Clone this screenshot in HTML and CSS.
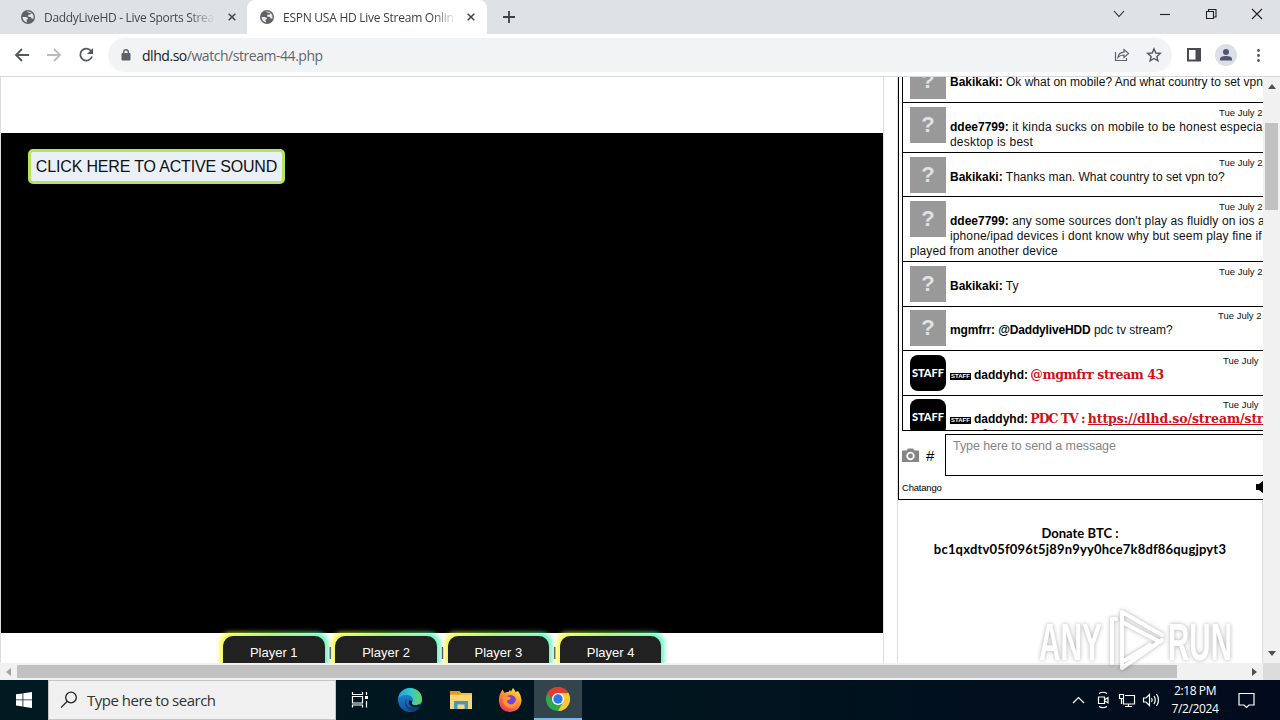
FILE: index.html
```html
<!DOCTYPE html>
<html lang="en">
<head>
    <meta charset="UTF-8">
    <meta name="viewport" content="width=device-width, initial-scale=1.0">
    <title>ESPN USA HD Live Stream Online</title>
    <link rel="stylesheet" href="styles.css">
</head>
<body>
    <svg width="0" height="0" class="defs">
        <symbol id="globe" viewBox="0 0 14 14">
            <circle cx="7" cy="7" r="7" fill="#5f6368"/>
            <path d="M1.5 7 L4.5 7 Q7 7 7 9 L5.5 9.5 L6 12.4 Q2 11.8 1.5 7Z M5.4 1.8 Q8 1 10.5 2.7 L9.5 4.5 L7.2 4.8 L7.4 6.8 L10 7 L10.6 8.6 L12.5 8.8 Q13 6 11.6 3.7" fill="#e8eaed"/>
        </symbol>
    </svg>

    <div class="tabs">
        <div class="tab">
            <svg class="favicon"><use href="#globe"/></svg>
            <span class="tab-title tab-title-first">DaddyLiveHD - Live Sports Strea</span>
            <svg class="tab-close" viewBox="0 0 8 8"><path d="M.7 .7 L7.3 7.3 M7.3 .7 L.7 7.3"/></svg>
        </div>
        <div class="tab active">
            <svg class="favicon"><use href="#globe"/></svg>
            <span class="tab-title">ESPN USA HD Live Stream Onlin</span>
            <svg class="tab-close" viewBox="0 0 8 8"><path d="M.7 .7 L7.3 7.3 M7.3 .7 L.7 7.3"/></svg>
        </div>
        <svg class="new-tab" viewBox="0 0 12 12"><path d="M6 0 V12 M0 6 H12" stroke="#3c4043" stroke-width="1.8"/></svg>
        <svg class="window-buttons" width="164" height="34" viewBox="0 0 164 34" fill="none" stroke="#222" stroke-width="1.1">
            <path d="M4 11 L9 16.5 L14 11"/>
            <path d="M50 14.5 H60"/>
            <path d="M96.5 11.5 h7 v7 h-7z M98.5 11.5 v-2 h7.5 v7.5 h-2.5"/>
            <path d="M142 9 L152 19 M152 9 L142 19"/>
        </svg>
    </div>

    <div class="toolbar">
        <svg class="nav" width="100" height="42" viewBox="0 0 100 42" fill="none" stroke="#55585c" stroke-width="1.8">
            <path d="M29 21 H16 M22 15 L16 21 L22 27"/>
            <path d="M47 21 H60 M54 15 L60 21 L54 27" stroke="#b8babd"/>
            <path d="M91.3 17.3 A6 6 0 1 0 92 22.5"/>
            <path d="M93 14 V20 H87Z" fill="#55585c" stroke="none"/>
        </svg>
        <div class="omnibox">
            <svg class="lock" width="10" height="12" viewBox="0 0 10 12"><path d="M1 4.5 H9 V11 H1Z" fill="#5f6368" stroke="#5f6368"/><path d="M2.7 4.5 V3 a2.3 2.3 0 0 1 4.6 0 V4.5" fill="none" stroke="#5f6368" stroke-width="1.4"/></svg>
            <span class="url"><b>dlhd.so</b>/watch/stream-44.php</span>
            <svg class="share" width="16" height="16" viewBox="0 0 16 16" fill="none" stroke="#5f6368" stroke-width="1.2"><path d="M1.5 5 V13.5 H12.5 V11"/><path d="M4 10.5 Q4.5 5.5 10 5.2 V2.5 L14.5 6.5 L10 10.5 V8 Q6 7.8 4 10.5Z"/></svg>
            <svg class="star" width="16" height="16" viewBox="0 0 16 16" fill="none" stroke="#55585c" stroke-width="1.4"><path d="M8 1.8 L9.8 6 L14.3 6.4 L10.9 9.4 L11.9 13.8 L8 11.5 L4.1 13.8 L5.1 9.4 L1.7 6.4 L6.2 6Z"/></svg>
        </div>
        <svg class="tools" width="96" height="42" viewBox="0 0 96 42">
            <path d="M4 15 H16 V26.5 H4Z" fill="none" stroke="#484b50" stroke-width="2"/><path d="M11.5 15 H17 V27 H11.5Z" fill="#484b50"/>
            <circle cx="42" cy="21" r="11" fill="#dcdfe8"/><circle cx="42" cy="18" r="3" fill="#505672"/><path d="M36 26.5 V25 Q36 22 42 22 Q48 22 48 25 V26.5Z" fill="#505672"/>
            <circle cx="74.5" cy="16.5" r="1.4" fill="#55585c"/><circle cx="74.5" cy="21.5" r="1.4" fill="#55585c"/><circle cx="74.5" cy="26.5" r="1.4" fill="#55585c"/>
        </svg>
    </div>

    <div class="viewport">
        <div class="page">
            <div class="main">
                <div class="player">
                    <button class="unmute">CLICK HERE TO ACTIVE SOUND</button>
                </div>
                <div class="players">
                    <button class="glow">Player 1</button><i>|</i>
                    <button class="glow">Player 2</button><i>|</i>
                    <button class="glow">Player 3</button><i>|</i>
                    <button class="glow">Player 4</button>
                </div>
            </div>

            <div class="sidebar">
                <div class="chat">
                    <div class="messages">
                        <div class="msg first">
                            <span class="avatar">?</span>
                            <div class="date">Tue July 2</div>
                            <b>Bakikaki:</b> Ok what on mobile? And what country to set vpn
                        </div>
                        <div class="msg two">
                            <span class="avatar">?</span>
                            <div class="date">Tue July 2</div>
                            <b>ddee7799:</b> it kinda sucks on mobile to be honest especia<br>desktop is best
                        </div>
                        <div class="msg">
                            <span class="avatar">?</span>
                            <div class="date">Tue July 2</div>
                            <b>Bakikaki:</b> Thanks man. What country to set vpn to?
                        </div>
                        <div class="msg three">
                            <span class="avatar">?</span>
                            <div class="date">Tue July 2</div>
                            <b>ddee7799:</b> any some sources don't play as fluidly on ios a<br>iphone/ipad devices i dont know why but seem play fine if<br>played from another device
                        </div>
                        <div class="msg tall">
                            <span class="avatar">?</span>
                            <div class="date">Tue July 2</div>
                            <b>Bakikaki:</b> Ty
                        </div>
                        <div class="msg tight">
                            <span class="avatar">?</span>
                            <div class="date early">Tue July 2</div>
                            <b class="mention">mgmfrr: @DaddyliveHDD</b> pdc tv stream?
                        </div>
                        <div class="msg tall">
                            <span class="avatar staff">STAFF</span>
                            <div class="date late">Tue July</div>
                            <span class="badge">STAFF</span><b>daddyhd:</b> <span class="red">@mgmfrr stream 43</span>
                        </div>
                        <div class="msg tight two">
                            <span class="avatar staff">STAFF</span>
                            <div class="date late">Tue July</div>
                            <span class="badge">STAFF</span><b>daddyhd:</b> <span class="red"><span class="narrow">PDC TV : </span><u>https://dlhd.so/stream/str</u><br><span class="wrapped">ph</span></span>
                        </div>
                    </div>
                    <div class="compose">
                        <svg width="17" height="14" viewBox="0 0 17 14"><path d="M0 2.5 H4.5 L6 .5 H11 L12.5 2.5 H17 V14 H0Z" fill="#858585"/><circle cx="8.5" cy="8" r="3.3" fill="none" stroke="#fff" stroke-width="1.8"/></svg>
                        <span class="hash">#</span>
                        <div class="input">Type here to send a message</div>
                    </div>
                    <div class="chat-foot">
                        <span>Chatango</span>
                        <svg width="8" height="14" viewBox="0 0 8 14"><path d="M0 4 H3 L8 0 V14 L3 10 H0Z"/></svg>
                    </div>
                </div>
                <p class="donate">Donate BTC :<br><span>bc1qxdtv05f096t5j89n9yy0hce7k8df86qugjpyt3</span></p>
            </div>
        </div>

        <div class="vscroll">
            <svg width="8" height="5" viewBox="0 0 8 5"><path d="M0 5 L4 0 L8 5Z" fill="#505050"/></svg>
            <div class="vthumb"></div>
            <svg width="8" height="5" viewBox="0 0 8 5"><path d="M0 0 L4 5 L8 0Z" fill="#505050"/></svg>
        </div>
        <div class="hscroll">
            <svg width="5" height="8" viewBox="0 0 5 8"><path d="M5 0 L0 4 L5 8Z" fill="#a3a3a3"/></svg>
            <div class="hthumb"></div>
            <svg width="5" height="8" viewBox="0 0 5 8"><path d="M0 0 L5 4 L0 8Z" fill="#505050"/></svg>
        </div>
        <div class="corner"></div>
    </div>

    <svg class="watermark" width="210" height="72" viewBox="0 0 210 72">
        <text x="7" y="54" textLength="63" lengthAdjust="spacingAndGlyphs">ANY</text>
        <text x="136" y="54" textLength="64" lengthAdjust="spacingAndGlyphs">RUN</text>
        <path d="M80 57 V13 H84 M90 56 V6 L130 29 M92 17 L128 36 M130 34 L90 62 V56 L118 39" fill="none" stroke="#fff" stroke-width="4" stroke-linejoin="round" stroke-linecap="round"/>
    </svg>

    <div class="taskbar">
        <svg class="start" width="16" height="16" viewBox="0 0 16 16" fill="#fff"><path d="M0 2.3 L6.5 1.4 V7.5 H0Z M7.3 1.3 L16 0 V7.5 H7.3Z M0 8.3 H6.5 V14.5 L0 13.6Z M7.3 8.3 H16 V16 L7.3 14.7Z"/></svg>
        <div class="search">
            <svg width="18" height="18" viewBox="0 0 18 18" fill="none" stroke="#222" stroke-width="1.3"><circle cx="11" cy="6.5" r="5.3"/><path d="M7.3 10.3 L1 16.6"/></svg>
            <span>Type here to search</span>
        </div>
        <div class="app first-app"><svg width="18" height="18" viewBox="0 0 18 18" fill="none" stroke="#fff" stroke-width="1.2"><path d="M1.5 1 V3.5 H11.5 V1 M1.5 5.5 H11.5 V12 H1.5Z M1.5 16.5 V14 H11.5 V16.5 M15.5 1 V4 M15.5 10 V16.5"/><path d="M14 5 H17 V8 H14Z" fill="#fff" stroke="none"/></svg></div>
        <div class="app wide">
            <svg width="24" height="24" viewBox="0 0 24 24">
                <defs>
                    <linearGradient id="edge-top"><stop offset="0" stop-color="#219fdc"/><stop offset=".55" stop-color="#38c8c8"/><stop offset="1" stop-color="#65d45a"/></linearGradient>
                    <linearGradient id="edge-low" x2="0" y2="1"><stop offset="0" stop-color="#1b93dc"/><stop offset="1" stop-color="#1250a0"/></linearGradient>
                </defs>
                <circle cx="12" cy="12" r="12" fill="url(#edge-low)"/>
                <path d="M0 11 C1 4 6 0 12 0 C19 0 24 5 24 11 C24 15 21 17 17.5 17 C14 17 13 15.5 14.5 13.5 C16 10 13 7 9 7 C5 7 1 8.5 0 11Z" fill="url(#edge-top)"/>
                <path d="M9 11 C6 18 12 22 22 18 C20 21 18 23 15 23.6 C7 22 5 14 9 11Z" fill="#0d4078"/>
                <path d="M14.5 13.5 C12.5 16 15 17.8 19 17 C24 16 24.5 17 22.5 18.5 C14 21.5 9 16 11.5 12Z" fill="#001821"/>
            </svg>
        </div>
        <div class="app"><svg width="22" height="18" viewBox="0 0 22 18"><path d="M0 0 H9 L11 2 H22 V18 H0Z" fill="#f5bd38"/><path d="M0 0 H9 L11 2 L9 3.5 H0Z" fill="#e49a22"/><path d="M0 4 H22 V18 H0Z" fill="#fad675"/><path d="M4 10 H18 V18 H14.5 V13.5 H7.5 V18 H4Z" fill="#4398c9"/></svg></div>
        <div class="app">
            <svg width="24" height="24" viewBox="0 0 24 24">
                <defs><linearGradient id="fox" x1=".8" x2=".2" y2="1"><stop offset="0" stop-color="#ffe748"/><stop offset=".45" stop-color="#ff9030"/><stop offset="1" stop-color="#f32868"/></linearGradient></defs>
                <path d="M3 4 L4.5 1.5 L6.5 5 Q8 3.5 10.5 4 L12 2 L13 3.5 L15 0 Q17 2 17.5 4 L20 3 Q24 8 23.5 13 Q22.5 23 12 24 Q2 23.5 1 14 Q.5 8 3 4Z" fill="url(#fox)"/>
                <circle cx="12.5" cy="12.5" r="5.5" fill="#7545d3"/>
                <path d="M5 9 Q9 7 13 10 Q12 12 9 12.5 Q9 16 13 16.5 Q17 16 17.5 12 Q20 18 14 20 Q7 20 5 14Z" fill="#ff9830"/>
            </svg>
        </div>
        <div class="app running">
            <svg width="24" height="24" viewBox="0 0 24 24">
                <circle cx="12" cy="12" r="12" fill="#2da94f"/>
                <path d="M12 24 A12 12 0 0 0 22.4 6 H12 L17.2 15Z" fill="#fcc934"/>
                <path d="M1.6 6 A12 12 0 0 1 22.4 6 H12 A6 6 0 0 0 6.8 15Z" fill="#e33b2e"/>
                <circle cx="12" cy="12" r="6" fill="#fff"/><circle cx="12" cy="12" r="4.7" fill="#2b78e8"/>
            </svg>
        </div>
        <svg class="tray" width="90" height="20" viewBox="0 0 90 20" fill="none" stroke="#fff" stroke-width="1.2">
            <path d="M1 13 L6.5 7.5 L12 13"/>
            <path d="M26.5 7 H32.5 V13.5 H26.5Z M33 9.5 L36 7.5 V13 L33 11 M27 3.5 Q31 1 35 3.5 M27 16.5 Q31 19 35 16.5"/>
            <path d="M53 5.5 H62.5 V14 H51.5 V9 M56.5 14 V16.5 M53 16.5 H60 M47.5 4.5 H51.5 V8.5 H47.5Z M49.5 8.5 V14"/>
            <path d="M71.5 8 H74 L77.5 4.5 V15.5 L74 12 H71.5Z M79.5 8 Q81 10 79.5 12 M82 6 Q84.5 10 82 14 M84.5 4 Q88.5 10 84.5 16"/>
        </svg>
        <div class="clock">2:18 PM<br>7/2/2024</div>
        <svg class="notice" width="17" height="17" viewBox="0 0 17 17" fill="none" stroke="#fff" stroke-width="1.2"><path d="M1 1.5 H16 V13 H11 L8.5 15.5 L6 13 H1Z"/></svg>
    </div>
</body>
</html>
```
FILE: styles.css
```css
* {
    box-sizing: border-box;
}
body {
    margin: 0;
    width: 1280px;
    height: 720px;
    overflow: hidden;
    background: #fff;
    font-family: "Liberation Sans", Arial, sans-serif;
    position: relative;
}
svg {
    display: block;
    flex: none;
}
.defs {
    position: absolute;
}

/* browser window */
.tabs {
    display: flex;
    height: 34px;
    background: #dee1e6;
}
.tab {
    display: flex;
    align-items: center;
    width: 247px;
    padding: 0 10px 0 21px;
    font: 12px "Open Sans", sans-serif;
    color: #45484d;
}
.tab.active {
    width: 240px;
    padding: 0 11px 0 13px;
    background: #fff;
    border-radius: 8px 8px 0 0;
    color: #3c4043;
}
.tab.active .tab-title {
    letter-spacing: -0.25px;
}
.favicon {
    width: 14px;
    height: 14px;
}
.tab-title {
    flex: 1;
    margin: 0 10px 0 9px;
    overflow: hidden;
    white-space: nowrap;
    letter-spacing: -0.3px;
    -webkit-mask-image: linear-gradient(90deg, #000 85%, transparent);
    mask-image: linear-gradient(90deg, #000 85%, transparent);
}
.tab-title-first {
    margin-right: 13px;
}
.tab-close {
    width: 8px;
    height: 8px;
    margin-right: 1px;
    fill: none;
    stroke: #45484d;
    stroke-width: 1.6;
}
.new-tab {
    width: 12px;
    height: 12px;
    margin: 11px 0 0 16px;
}
.window-buttons {
    margin-left: auto;
    margin-right: 6px;
}
.toolbar {
    display: flex;
    height: 43px;
    border-bottom: 1px solid #d6d8db;
    background: #fff;
}
.nav {
    margin-right: 8px;
}
.omnibox {
    display: flex;
    align-items: center;
    width: 1064px;
    height: 34px;
    margin: 4px 12px 0 0;
    padding: 0 10px 0 13px;
    border-radius: 17px;
    background: #f1f3f4;
}
.url {
    flex: 1;
    margin-left: 11px;
    font: 14px "Open Sans", sans-serif;
    letter-spacing: -0.46px;
    color: #62666b;
}
.url b {
    font-weight: normal;
    color: #202124;
}
.share {
    margin-right: 16px;
}

/* page area with its scrollbars */
.viewport {
    display: grid;
    grid-template-columns: 1263px 17px;
    grid-template-rows: 586px 17px;
}
.page {
    display: flex;
    gap: 13px;
    overflow: hidden;
}
.main {
    flex: none;
    width: 884px;
    border-left: 1px solid #ddd;
    border-right: 1px solid #ddd;
    padding-top: 56px;
}
.player {
    height: 500px;
    padding: 16px 27px;
    background: #000;
}
.unmute {
    display: block;
    width: 257px;
    height: 35px;
    padding: 0;
    border: 3px solid #b5e35c;
    border-radius: 5px;
    background: #eaf0f8;
    font: 16px "Liberation Sans", Arial, sans-serif;
    letter-spacing: -0.17px;
    color: #111;
    white-space: nowrap;
}
.players {
    display: flex;
    position: relative;
    z-index: 0;
    padding: 3px 0 0 222px;
    font-size: 13px;
}
.players i {
    width: 10.8px;
    padding-left: 4px;
    font-style: normal;
    line-height: 32px;
    color: #333;
}
.glow {
    position: relative;
    width: 101.5px;
    height: 36px;
    padding: 0 0 3px;
    border: none;
    border-radius: 10px;
    background: #212121;
    color: #fff;
    font: 13px "Liberation Sans", Arial, sans-serif;
}
.glow::before {
    content: "";
    position: absolute;
    inset: -3px;
    z-index: -1;
    border-radius: 10px;
    background: linear-gradient(90deg, #fff83c, #90fa48 45%, #58f8c4);
    filter: blur(2.5px);
}
.sidebar {
    flex: none;
    width: 366px;
    border-left: 1px solid #ddd;
    border-right: 1px solid #ddd;
}
.chat {
    width: 380px;
    height: 423px;
    padding-left: 3px;
    border-left: 1px solid #000;
    border-bottom: 1px solid #000;
    background: #fff;
    position: relative;
}
.messages {
    height: 354px;
    overflow: hidden;
    border-left: 1px solid #000;
    border-bottom: 1px solid #000;
}
.msg {
    height: 44px;
    padding: 4px 0 0 7px;
    border-bottom: 1px solid #000;
    overflow: hidden;
    font-size: 12px;
    line-height: 15px;
    white-space: nowrap;
    color: #111;
}
.msg.first {
    margin-top: -18px;
}
.msg.tall {
    height: 45px;
}
.msg.two {
    height: 50px;
    letter-spacing: 0.2px;
}
.msg.three {
    height: 65px;
    letter-spacing: 0.12px;
}
.msg.tight {
    padding-top: 3px;
    letter-spacing: 0;
}
.msg b {
    color: #000;
    letter-spacing: 0;
}
.msg .mention {
    letter-spacing: -0.15px;
}
.avatar {
    float: left;
    width: 36px;
    height: 36px;
    margin-right: 4px;
    background: #999;
    color: #e2e2e2;
    font: bold 22px/36px "Liberation Sans", Arial, sans-serif;
    text-align: center;
    letter-spacing: 0;
}
.avatar.staff {
    border-radius: 8px;
    background: #000;
    color: #fff;
    font: 900 11px/36px Lato, sans-serif;
}
.date {
    height: 13px;
    padding-left: 309px;
    font-size: 9.5px;
    line-height: 12px;
    letter-spacing: 0;
}
.first .date {
    height: 12px;
}
.date.early {
    padding-left: 308px;
}
.date.late {
    height: 12px;
    padding-left: 313px;
}
.badge {
    display: inline-block;
    width: 21px;
    height: 7px;
    margin-right: 3px;
    background: #000;
    color: #fff;
    font: bold 6px/7px "Liberation Sans", Arial, sans-serif;
    text-align: center;
    vertical-align: 1px;
}
.red {
    margin-left: -1px;
    color: #d01018;
    font: bold 12.5px/15px "DejaVu Serif", serif;
    letter-spacing: -0.45px;
}
.red u {
    letter-spacing: -0.1px;
}
.narrow {
    letter-spacing: -1.05px;
}
.wrapped {
    margin-left: 25px;
}
.compose {
    display: flex;
    align-items: center;
    height: 42px;
    margin-top: 3px;
}
.hash {
    width: 26px;
    padding-left: 7px;
    font-size: 15px;
}
.input {
    flex: 1;
    height: 42px;
    padding: 4px 7px;
    border: 1px solid #000;
    font-size: 12.5px;
    line-height: 15px;
    letter-spacing: -0.07px;
    color: #858585;
}
.chat-foot {
    display: flex;
    align-items: center;
    height: 22px;
    font-size: 9.5px;
}
.chat-foot span {
    width: 354px;
    letter-spacing: -0.2px;
}
.donate {
    margin: 25px 0 0;
    font: bold 13px/16px Lato, sans-serif;
    text-align: center;
}
.donate span {
    letter-spacing: 0.19px;
}

.vscroll {
    display: flex;
    flex-direction: column;
    align-items: center;
    padding: 7px 0;
    background: #f1f1f1;
}
.vthumb {
    width: 13px;
    height: 87px;
    margin: 34px 0 auto;
    background: #c1c1c1;
}
.hscroll {
    display: flex;
    align-items: center;
    padding: 0 6px;
    background: #f1f1f1;
}
.hthumb {
    width: 1160px;
    height: 13px;
    margin: 0 auto 0 6px;
    background: #c1c1c1;
}
.corner {
    background: #dcdcdc;
}
.watermark {
    position: absolute;
    left: 1032px;
    top: 606px;
    fill: #fff;
    filter: drop-shadow(0 0 2px rgba(0, 0, 0, 0.4));
    opacity: 0.8;
    font: bold 51px "Liberation Sans", Arial, sans-serif;
}

/* desktop taskbar */
.taskbar {
    display: flex;
    align-items: center;
    height: 40px;
    background: linear-gradient(90deg, #001a22, #00151f 50%, #020b1d);
    color: #fff;
}
.start {
    margin: 0 16px;
}
.search {
    display: flex;
    align-items: center;
    width: 288px;
    height: 40px;
    padding: 0 11px;
    border: 1px solid #c4c4c4;
    background: #f0f0f0;
    font: 15px "Open Sans", sans-serif;
    letter-spacing: -0.5px;
    color: #333;
}
.search span {
    margin-left: 9px;
}
.app {
    display: flex;
    align-items: center;
    justify-content: center;
    width: 49px;
    height: 40px;
}
.app.first-app {
    width: 48px;
}
.app.wide {
    width: 52px;
}
.app.running {
    width: 48px;
    background: #33444d;
    border-bottom: 2px solid #76b9ed;
}
.tray {
    margin-left: auto;
}
.clock {
    width: 66px;
    font: 12px/18px "Open Sans", sans-serif;
    letter-spacing: -0.4px;
    text-align: center;
}
.notice {
    margin: 0 25px 0 10px;
}
```
